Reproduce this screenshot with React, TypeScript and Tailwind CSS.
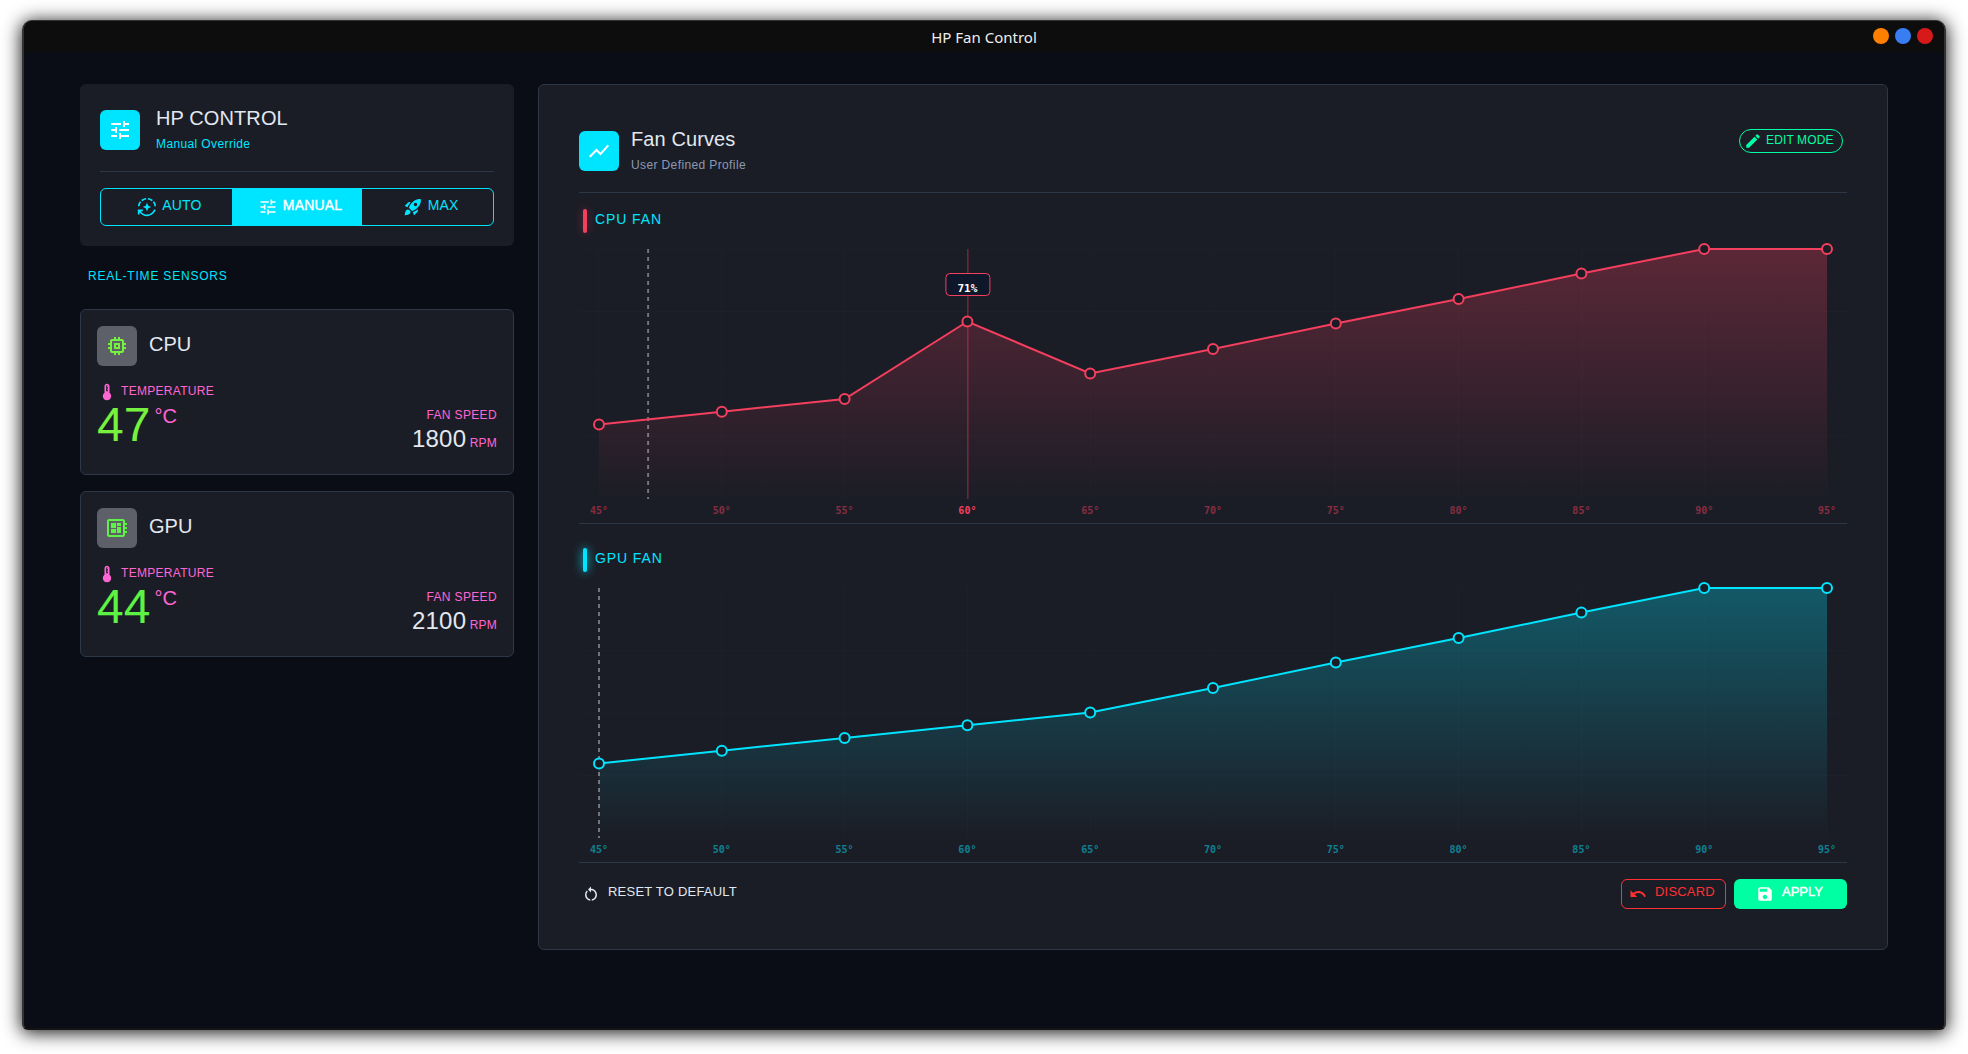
import { useState } from 'react'
import type { IconType } from 'react-icons'
import {
  MdAutoMode,
  MdDeveloperBoard,
  MdDeviceThermostat,
  MdEdit,
  MdMemory,
  MdRestartAlt,
  MdRocketLaunch,
  MdSave,
  MdShowChart,
  MdTune,
  MdUndo,
} from 'react-icons/md'

type Mode = 'AUTO' | 'MANUAL' | 'MAX'

interface SensorProps {
  name: string
  icon: IconType
  temp: number
  rpm: number
  color: string
}

interface CurveProps {
  id: string
  points: number[]
  color: string
  currentTemp: number
  active?: number
}

const MODES: { name: Mode; icon: IconType }[] = [
  { name: 'AUTO', icon: MdAutoMode },
  { name: 'MANUAL', icon: MdTune },
  { name: 'MAX', icon: MdRocketLaunch },
]

// Percentages come from 8-bit PWM steps, so they are not always whole
const TEMPS = [45, 50, 55, 60, 65, 70, 75, 80, 85, 90, 95]
const CPU_CURVE = [29.8, 34.9, 40, 71, 50.2, 60, 70.2, 80, 90.2, 100, 100]
const GPU_CURVE = [29.8, 34.9, 40, 45.1, 50.2, 60, 70.2, 80, 90.2, 100, 100]

const CHART_W = 1268
const CHART_H = 250
const PAD_X = 20

function xFor(temp: number) {
  const t = Math.max(45, Math.min(95, temp))
  return PAD_X + ((t - 45) / 50) * (CHART_W - PAD_X * 2)
}

function yFor(pct: number) {
  return CHART_H - (pct / 100) * CHART_H
}

function TitleBar() {
  return (
    <header className="grid h-[31px] grid-cols-[1fr_auto_1fr] items-center bg-[#0d0d0d]">
      <span className="col-start-2 font-['Noto_Sans'] text-[15px] leading-[30px] text-[#ededed]">HP Fan Control</span>
      <div className="flex justify-end gap-1.5 pr-[11px] pb-px">
        <span className="size-4 rounded-full bg-[#ff8000]" />
        <span className="size-4 rounded-full bg-[#387df2]" />
        <span className="size-4 rounded-full bg-[#d61a1a]" />
      </div>
    </header>
  )
}

function ControlCard() {
  const [mode, setMode] = useState<Mode>('MANUAL')

  return (
    <section className="rounded-md bg-[#1b1d26] p-5">
      <div className="flex h-12 gap-4">
        <div className="mt-1.5 flex size-10 items-center justify-center rounded-md bg-[#00e5ff] text-white">
          <MdTune size={24} />
        </div>
        <div>
          <h1 className="text-[20px] leading-7 tracking-[0.1px] text-[#e2e8f0]">HP CONTROL</h1>
          <p className="mt-1 text-xs leading-4 tracking-[0.38px] text-[#00e5ff]">Manual Override</p>
        </div>
      </div>

      <div className="mt-[19px] h-px bg-[#2d3748]" />

      <div className="mt-4 grid h-[38px] grid-cols-3 overflow-hidden rounded-md border border-[#00e5ff]">
        {MODES.map(({ name, icon: Icon }) => (
          <button
            key={name}
            type="button"
            onClick={() => setMode(name)}
            className={`flex items-center justify-center gap-[5px] pl-[6px] text-sm tracking-[0.15px] ${
              mode === name ? 'bg-[#00e5ff] text-white' : 'text-[#00e5ff]'
            }`}
          >
            <Icon size={20} />
            <span className={mode === name ? 'pb-1 [-webkit-text-stroke:0.4px]' : 'pb-1'}>{name}</span>
          </button>
        ))}
      </div>
    </section>
  )
}

function SensorCard({ name, icon: Icon, temp, rpm, color }: SensorProps) {
  return (
    <section className="h-[166px] rounded-md border border-[#2d3748] bg-[#1b1d26] p-4">
      <div className="flex gap-3">
        <div className="flex size-10 items-center justify-center rounded-md bg-[#5d6068]" style={{ color }}>
          <Icon size={24} />
        </div>
        <h2 className="mt-1 text-[20px] leading-7 text-[#e2e8f0]">{name}</h2>
      </div>

      <div className="mt-4 flex justify-between text-[#ff66d4]">
        <div>
          <div className="flex h-5 items-center gap-1 text-xs tracking-[0.3px]">
            <MdDeviceThermostat size={20} />
            <span className="pb-[3px]">TEMPERATURE</span>
          </div>
          <div className="flex gap-1 leading-none">
            <span className="text-5xl leading-[46px]" style={{ color }}>{temp}</span>
            <span className="text-[20px] leading-7">°C</span>
          </div>
        </div>
        <div className="mt-[25px] text-right text-xs">
          <p className="leading-4 tracking-[0.35px]">FAN SPEED</p>
          <p className="mt-0.5 leading-7 tracking-[0.2px]">
            <span className="text-2xl leading-7 text-[#e2e8f0]">{rpm}</span> RPM
          </p>
        </div>
      </div>
    </section>
  )
}

function CurveChart({ id, points, color, currentTemp, active }: CurveProps) {
  const line = points.map((p, i) => `${xFor(TEMPS[i])},${yFor(p)}`)
  const area = `${xFor(45)},${CHART_H} ${line.join(' ')} ${xFor(95)},${CHART_H}`
  const activeIdx = active ? TEMPS.indexOf(active) : -1
  const activeX = active ? xFor(active) : 0
  const activeY = activeIdx >= 0 ? yFor(points[activeIdx]) : 0

  return (
    <svg width={CHART_W} height={274} className="block overflow-visible">
      <defs>
        <linearGradient id={id} gradientUnits="userSpaceOnUse" x1="0" y1="0" x2="0" y2={CHART_H}>
          <stop offset="0" stopColor={color} stopOpacity="0.3" />
          <stop offset="1" stopColor={color} stopOpacity="0" />
        </linearGradient>
      </defs>

      {/* Grid */}
      {[0, 25, 50, 75, 100].map((p) => (
        <line key={p} x1="0" x2={CHART_W} y1={yFor(p)} y2={yFor(p)} stroke="#fff" strokeOpacity="0.015" />
      ))}
      {TEMPS.map((t) => (
        <line key={t} x1={xFor(t)} x2={xFor(t)} y1="0" y2={CHART_H} stroke="#fff" strokeOpacity="0.02" />
      ))}

      <polygon points={area} fill={`url(#${id})`} />
      <line
        x1={xFor(currentTemp)}
        x2={xFor(currentTemp)}
        y1="0"
        y2={CHART_H}
        stroke="#fff"
        strokeOpacity="0.38"
        strokeWidth="2"
        strokeDasharray="4 4"
      />
      {active && (
        <line x1={activeX + 0.5} x2={activeX + 0.5} y1="0" y2={CHART_H} stroke={color} strokeOpacity="0.55" />
      )}
      <polyline points={line.join(' ')} fill="none" stroke={color} strokeWidth="2" />
      {points.map((p, i) => (
        <circle key={TEMPS[i]} cx={xFor(TEMPS[i])} cy={yFor(p)} r="5" fill="#1b1d26" stroke={color} strokeWidth="2" />
      ))}

      {active && (
        <>
          <rect x={activeX - 21.5} y={activeY - 48} width="44" height="22" rx="4" fill="#0f172a" stroke={color} />
          <text
            x={activeX}
            y={activeY - 29.5}
            textAnchor="middle"
            fill="#fff"
            className="font-['DejaVu_Sans_Mono'] text-[11px] font-bold"
          >
            {Math.round(points[activeIdx])}%
          </text>
        </>
      )}

      {TEMPS.map((t) => (
        <text
          key={t}
          x={xFor(t)}
          y="265"
          textAnchor="middle"
          fill={color}
          fillOpacity={t === active ? 1 : 0.5}
          className="font-['DejaVu_Sans_Mono'] text-[10px] font-bold"
        >
          {t}°
        </text>
      ))}
    </svg>
  )
}

function CurvesPanel() {
  return (
    <main className="h-[866px] w-[1350px] rounded-md border border-[#2d3748] bg-[#1b1d26] p-10">
      <div className="flex h-12 gap-3">
        <div className="mt-1.5 flex size-10 items-center justify-center rounded-md bg-[#00e5ff] text-white">
          <MdShowChart size={24} />
        </div>
        <div>
          <h2 className="text-[20px] leading-7 tracking-[0.1px] text-[#e2e8f0]">Fan Curves</h2>
          <p className="mt-1 text-xs leading-4 tracking-[0.38px] text-[#8d99b3]">User Defined Profile</p>
        </div>
        <div className="mt-1 mr-1 ml-auto flex h-6 w-[104px] items-center gap-1 rounded-full border border-[#00ffa3] pl-1 text-xs tracking-[0.13px] text-[#00ffa3]">
          <MdEdit size={18} />
          <span className="pb-0.5">EDIT MODE</span>
        </div>
      </div>

      <div className="mt-[19px] h-px bg-[#2d3748]" />

      <div className="mt-4 mb-4 flex h-6 items-center gap-2 pl-1">
        <span className="h-6 w-1 rounded-xs bg-[#f43f5e] shadow-[0_0_10px_rgba(244,63,94,0.4)]" />
        <h3 className="pb-1 text-sm tracking-[0.9px] text-[#00e5ff]">CPU FAN</h3>
      </div>
      <CurveChart id="cpu-fill" points={CPU_CURVE} color="#f43f5e" currentTemp={47} active={60} />

      <div className="h-px bg-[#2d3748]" />

      <div className="mt-6 mb-4 flex h-6 items-center gap-2 pl-1">
        <span className="h-6 w-1 rounded-xs bg-[#00e5ff] shadow-[0_0_10px_#00e5ff]" />
        <h3 className="pb-1 text-sm tracking-[0.9px] text-[#00e5ff]">GPU FAN</h3>
      </div>
      <CurveChart id="gpu-fill" points={GPU_CURVE} color="#00e5ff" currentTemp={44} />

      <div className="h-px bg-[#2d3748]" />

      <div className="mt-4 flex h-[30px] items-center text-[13px]">
        <button type="button" className="flex items-center gap-2 pl-[3px] tracking-[0.22px] text-[#e2e8f0]">
          <MdRestartAlt size={18} />
          <span className="pb-1">RESET TO DEFAULT</span>
        </button>
        <button
          type="button"
          className="ml-auto flex h-[30px] w-[105px] items-center gap-2 rounded-md border border-[#ff3030] pl-[7px] tracking-[0.2px] text-[#ff3030]"
        >
          <MdUndo size={18} />
          <span className="pb-1">DISCARD</span>
        </button>
        <button
          type="button"
          className="ml-2 flex h-[30px] w-[113px] items-center gap-2 rounded-md bg-[#00ffa3] pl-[22px] text-white"
        >
          <MdSave size={18} />
          <span className="pb-1 [-webkit-text-stroke:0.4px]">APPLY</span>
        </button>
      </div>
    </main>
  )
}

export default function App() {
  return (
    <div className="h-[1054px] w-[1968px] overflow-hidden bg-white px-[22px] pt-5 font-['Liberation_Sans',sans-serif]">
      <div className="h-[1010px] overflow-hidden rounded-t-[10px] rounded-b-md border-x-2 border-t border-b-2 border-[#333] border-b-[#151313] bg-[#0a0d15] shadow-[0_2px_18px_1px_rgba(0,0,0,0.9)]">
        <TitleBar />
        <div className="flex gap-6 px-14 pt-8">
          <aside className="w-[434px]">
            <ControlCard />
            <h2 className="mt-[22px] mb-[25px] pl-2 text-xs leading-4 tracking-[0.8px] text-[#00e5ff]">REAL-TIME SENSORS</h2>
            <div className="flex flex-col gap-4">
              <SensorCard name="CPU" icon={MdMemory} temp={47} rpm={1800} color="#76f23e" />
              <SensorCard name="GPU" icon={MdDeveloperBoard} temp={44} rpm={2100} color="#5ef244" />
            </div>
          </aside>
          <CurvesPanel />
        </div>
      </div>
    </div>
  )
}
